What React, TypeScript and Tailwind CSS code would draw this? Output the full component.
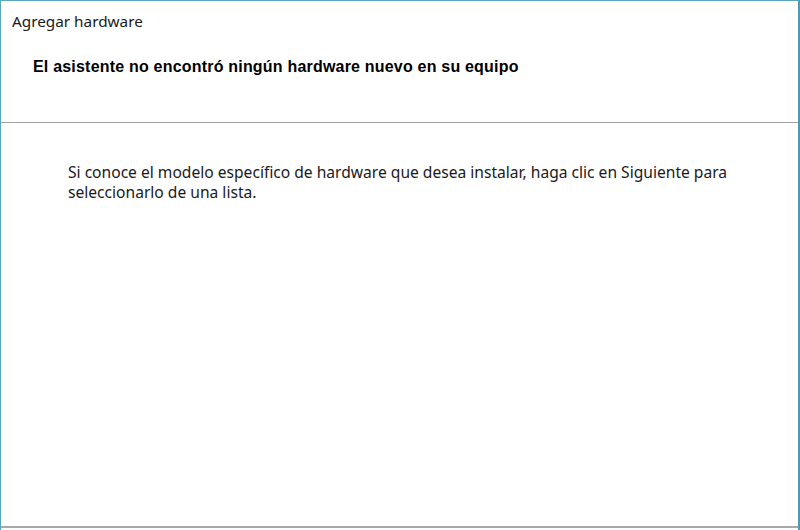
export default function App() {
  return (
    <div className="w-[800px] h-[530px] bg-white overflow-hidden flex flex-col border-l border-t border-[#5aa6bd] border-r-2 border-r-[#4d9ab2]">
      {/* Header */}
      <div className="h-[122px] shrink-0 border-b border-[#a0a0a0] flex flex-col">
        <div
          className="pl-[11px] pt-[10px] text-[15.3px] leading-[20px] text-[#1a1a1a]"
          style={{ fontFamily: '"Noto Sans", "Open Sans", sans-serif' }}
        >
          Agregar hardware
        </div>
        <div
          className="pl-[32px] pt-[26px] text-[16px] leading-[20px] font-bold tracking-[0.2px] text-black"
          style={{ fontFamily: '"Liberation Sans", Arial, sans-serif' }}
        >
          El asistente no encontró ningún hardware nuevo en su equipo
        </div>
      </div>
      {/* Body */}
      <div className="flex-1 flex flex-col">
        <div
          className="pl-[67px] pt-[39px] pr-[40px] text-[15.6px] leading-[20px] text-[#1a1a1a]"
          style={{ fontFamily: '"Noto Sans", "Open Sans", sans-serif' }}
        >
          Si conoce el modelo específico de hardware que desea instalar, haga clic en Siguiente para
          <br />
          seleccionarlo de una lista.
        </div>
        <div className="flex-1" />
        <div className="h-[4px] border-t-2 border-[#a8a8a8]" />
      </div>
    </div>
  )
}
